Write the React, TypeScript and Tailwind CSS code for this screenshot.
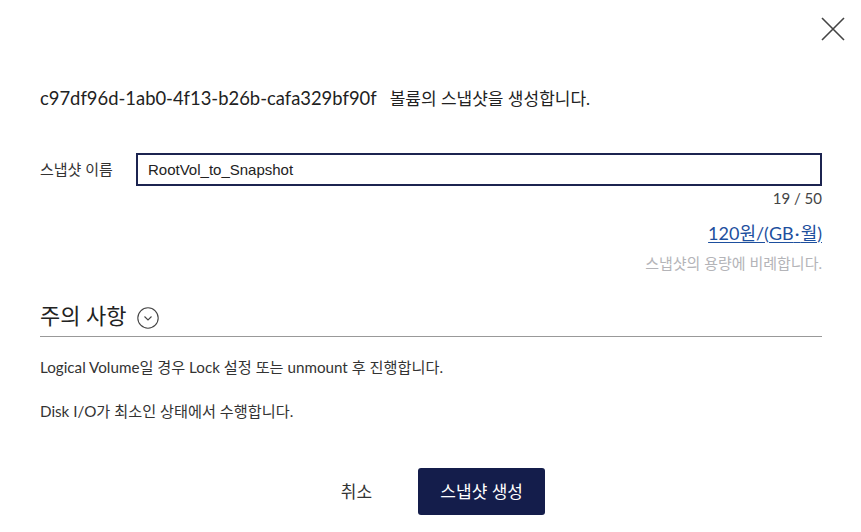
import { useState } from "react";

const FONT = { fontFamily: 'Lato, "Noto Sans CJK KR", sans-serif' };

export default function App() {
  const [name, setName] = useState("RootVol_to_Snapshot");

  return (
    <div className="relative w-[861px] h-[532px] bg-white text-[#333]" style={FONT}>
      {/* close */}
      <button className="absolute right-[16px] top-[17px] size-[24px] text-[#444]" aria-label="close">
        <svg viewBox="0 0 24 24" className="size-[24px]" fill="none" stroke="currentColor" strokeWidth="1.6">
          <path d="M1 1 L23 23 M23 1 L1 23" />
        </svg>
      </button>

      <div className="px-[40px] pt-[86px] pr-[39px]">
        <h2 className="text-[17px] leading-[24px] text-[#222]">
          <span className="text-[18.4px]">c97df96d-1ab0-4f13-b26b-cafa329bf90f</span>
          <span className="ml-[13px]">볼륨의 스냅샷을 생성합니다.</span>
        </h2>

        {/* name field */}
        <div className="mt-[42px] flex items-center">
          <label className="w-[96px] text-[15px] text-[#333]">스냅샷 이름</label>
          <input
            value={name}
            onChange={(e) => setName(e.target.value)}
            maxLength={50}
            className="flex-1 h-[33px] border-2 border-[#1c2450] px-[10px] text-[15px] text-[#222] outline-none"
            style={{ fontFamily: '"Liberation Sans", Arial, sans-serif' }}
          />
        </div>
        <p className="mt-[2px] text-right text-[15px] leading-[20px] text-[#444]">
          {name.length} / 50
        </p>

        {/* price */}
        <div className="mt-[13px] text-right">
          <a href="#" className="text-[18px] leading-[24px] text-[#1d4f9e] underline underline-offset-2">
            120원/(GB{"\u200A·\u200A"}월)
          </a>
          <p className="mt-[7px] text-[15px] leading-[20px] text-[#b4b4b8]">
            스냅샷의 용량에 비례합니다.
          </p>
        </div>

        {/* notice */}
        <div className="mt-[28px] flex items-center gap-[10px] border-b border-[#999] pb-[5px]">
          <h3 className="text-[22px] leading-[30px] text-[#222]">주의 사항</h3>
          <svg viewBox="0 0 22 22" className="size-[22px] mt-[3px]" fill="none" stroke="#444" strokeWidth="1.1">
            <circle cx="11" cy="11" r="10.2" />
            <path d="M7.5 9.5 L11 13 L14.5 9.5" />
          </svg>
        </div>
        <ul className="mt-[19px] space-y-[22px] text-[15.2px] leading-[22px] text-[#333]">
          <li>Logical Volume일 경우 Lock 설정 또는 unmount 후 진행합니다.</li>
          <li>Disk I/O가 최소인 상태에서 수행합니다.</li>
        </ul>

        {/* actions */}
        <div className="mt-[46px] flex justify-center items-center gap-[46px] pl-[24px]">
          <button className="text-[17px] text-[#333]">취소</button>
          <button className="h-[47px] w-[127px] rounded-[3px] bg-[#141d4b] text-[17px] text-white">
            스냅샷 생성
          </button>
        </div>
      </div>
    </div>
  );
}
